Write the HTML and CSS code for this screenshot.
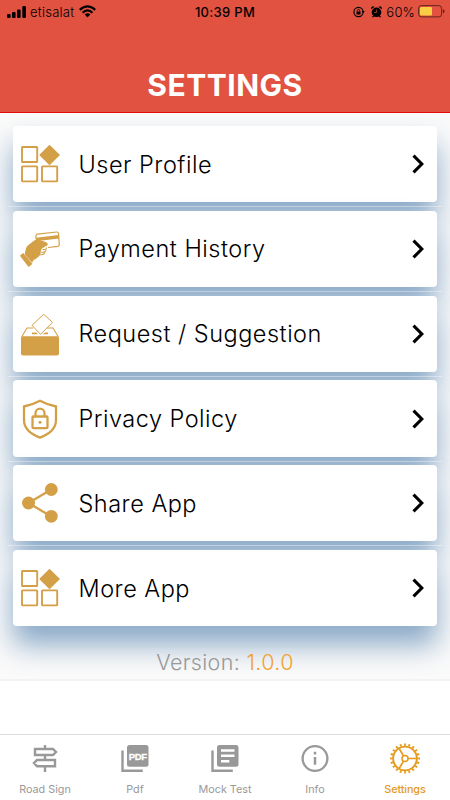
FILE: index.html
```html
<!DOCTYPE html>
<html lang="en">
<head>
<meta charset="utf-8">
<title>Settings</title>
<link rel="stylesheet" href="styles.css">
</head>
<body>
<svg class="defs" width="0" height="0" aria-hidden="true">
  <symbol id="grid" viewBox="0 0 40 40">
    <g fill="none" stroke="currentColor" stroke-width="1.9"><rect x="2" y="3" width="15.2" height="15" rx=".6"/><rect x="2" y="22.4" width="15.2" height="15" rx=".6"/><rect x="22" y="22.4" width="15.2" height="15" rx=".6"/></g>
    <path fill="currentColor" stroke="currentColor" stroke-width="1.5" stroke-linejoin="round" d="M29.5 1.7 39 11 29.5 20.3 20.2 11z"/>
  </symbol>
  <symbol id="chevron" viewBox="0 0 12 20"><path d="M1.5 1.6 9.8 10 1.5 18.4" fill="none" stroke="currentColor" stroke-width="3.1"/></symbol>
</svg>
<div class="phone">
  <header class="header">
    <div class="status">
      <div class="status-left">
        <svg width="20" height="12" viewBox="0 0 20 12"><rect x="0" y="8" width="3.6" height="4" rx="1"/><rect x="5" y="6" width="3.6" height="6" rx="1"/><rect x="10" y="3.4" width="3.6" height="8.6" rx="1"/><rect x="15.3" y="0" width="3.6" height="12" rx="1"/></svg>
        <span class="carrier">etisalat</span>
        <svg width="17" height="13" viewBox="0 0 17 13"><g fill="none" stroke="#000" stroke-width="2.2"><path d="M.8 4.9Q8.500-2 16.200 4.900"/><path d="M3.600 7.700Q8.500 3.200 13.400 7.700"/></g><path d="M5.700 9.500Q8.500 7 11.300 9.500L8.500 12.400z"/></svg>
      </div>
      <span class="time">10:39 PM</span>
      <div class="status-right">
        <svg width="12" height="12" viewBox="0 0 12 12"><circle cx="5.500" cy="6" r="4.600" fill="none" stroke="#000" stroke-width="1.100"/><rect x="3.500" y="5.500" width="4" height="3"/><path d="M4.300 5.500V4.600a1.200 1.200 0 0 1 2.400 0v.9" fill="none" stroke="#000" stroke-width=".8"/><path d="M8.700 5h3l-1.500 2.300z"/></svg>
        <svg class="alarm" width="11" height="12" viewBox="0 0 11 12"><circle cx="5.500" cy="6.300" r="4.800"/><path d="M.3 3.300A2 2 0 0 1 3.400.9zM10.700 3.300A2 2 0 0 0 7.600.9zM2 9.500.9 11.300h1.300l1.200-1zM9 9.500l1.100 1.800H8.800l-1.200-1z"/><path d="M5.600 3.600v2.900H3" fill="none" stroke="#e15241" stroke-width=".7"/></svg>
        <span class="percent">60%</span>
        <svg width="27" height="13" viewBox="0 0 27 13"><rect x=".6" y=".6" width="23" height="11.300" rx="2.800" fill="none" stroke="#000" stroke-opacity=".55"/><rect x="2" y="2" width="12" height="8.500" rx="1.300" fill="#f9ce45"/><path d="M24.900 4.200q1.600.4 1.600 2t-1.600 2z" fill-opacity=".6"/></svg>
      </div>
    </div>
    <h1>SETTINGS</h1>
  </header>
  <main class="content">
    <ul class="list">
      <li class="item"><svg class="icon"><use href="#grid"/></svg><span class="label">User Profile</span><svg class="chev"><use href="#chevron"/></svg></li>
      <li class="item"><svg class="icon" viewBox="0 0 40 40">
        <path fill="none" stroke="currentColor" stroke-width="1.200" d="M16.200 10.500 15.900 7q0-1.600 1.700-1.800L36.800 3q1.500-.1 1.700 1.400l.8 11q.1 1.600-1.400 1.900l-9.900 1.200"/>
        <path fill="currentColor" d="M16 8.800 38.700 6l.3 3.400-23 2.800z"/>
        <path fill="currentColor" d="M4.700 25.400 5.800 20q.5-2.500 2.600-4l5.500-4.300q1.600-1.200 3.600-1l5 1.400q3.600.9 5 2.200.9 1.400-.9 2.400l-4.300 2.600q-1.300 1-1.400 2.800-.1 3.500-2.200 5.500-2 2-5.300 3.700l-1.300 2.400z"/>
        <path fill="currentColor" d="M.3 27.200q-.4-.5.1-1l2.800-2.200 9.200 10.800-3 2.700q-.7.500-1.200 0z"/>
        <path fill="none" stroke="currentColor" stroke-width="1.100" stroke-linecap="round" d="M23 20.500q3.500.5 3.500-1.700M21.500 23.200q4 .4 4.400-1.600M20.500 25.700q3.500.2 4-1.800"/></svg><span class="label">Payment History</span><svg class="chev"><use href="#chevron"/></svg></li>
      <li class="item"><svg class="icon" viewBox="0 0 40 40">
        <rect x="1" y="22.200" width="38" height="19.200" rx="2" fill="currentColor"/>
        <path d="M1.600 23 7 14h6M27 14h6L38.400 23" fill="none" stroke="currentColor" stroke-width="1.100"/>
        <path d="M12 18.400h4.300l1.600 1.800H12zM24.800 18.400H28v1.800h-5z" fill="currentColor"/>
        <path d="m12 11.300 11.700-11 8.800 8L20.500 20.400z" fill="#fff" stroke="currentColor" stroke-width="1"/></svg><span class="label">Request / Suggestion</span><svg class="chev"><use href="#chevron"/></svg></li>
      <li class="item"><svg class="icon" viewBox="0 0 40 40"><g fill="none" stroke="currentColor" stroke-width="2.300"><path d="M20 1.700Q28 6 36 7.500V21q0 11.600-16 17.600Q4 32.600 4 21V7.500Q12 6 20 1.700z"/><rect x="12.500" y="17.500" width="15" height="11.600" rx=".8"/><path d="M15.500 17.500v-3.300a4.500 4.500 0 0 1 9 0v3.300"/></g><circle cx="20" cy="23.300" r="1.500" fill="currentColor"/></svg><span class="label">Privacy Policy</span><svg class="chev"><use href="#chevron"/></svg></li>
      <li class="item"><svg class="icon" viewBox="0 0 40 40"><path d="M31.300 6.500 8.500 20 31.300 33.500" fill="none" stroke="currentColor" stroke-width="2.300"/><g fill="currentColor"><circle cx="31.300" cy="6.500" r="6.400"/><circle cx="8.500" cy="20" r="6.500"/><circle cx="31.300" cy="33.300" r="6.400"/></g></svg><span class="label">Share App</span><svg class="chev"><use href="#chevron"/></svg></li>
      <li class="item"><svg class="icon"><use href="#grid"/></svg><span class="label">More App</span><svg class="chev"><use href="#chevron"/></svg></li>
    </ul>
    <p class="version">Version: <span>1.0.0</span></p>
  </main>
  <nav class="tabs">
    <div class="tab"><svg viewBox="0 0 32 32"><path d="M16 3v3M16 13.500v4M16 24.500v5.500" stroke="currentColor" stroke-width="2.400"/><path d="M6 7h18l3 3-3 3H6zM26 18v6.200H8l-3-3.100 3-3.100z" fill="none" stroke="currentColor" stroke-width="2.400"/></svg><span>Road Sign</span></div>
    <div class="tab"><svg viewBox="0 0 32 32"><path d="M3.500 8.500v20.200h20.300" fill="none" stroke="currentColor" stroke-width="2.400"/><rect x="8" y="3" width="21.500" height="21.800" rx="2.500" fill="currentColor"/><text class="pdf" x="9.700" y="17.500" textLength="18.300" lengthAdjust="spacing">PDF</text></svg><span>Pdf</span></div>
    <div class="tab"><svg viewBox="0 0 32 32"><path d="M3.500 8.500v20.200h20.300" fill="none" stroke="currentColor" stroke-width="2.400"/><rect x="8" y="3" width="21.500" height="21.800" rx="2.500" fill="currentColor"/><path d="M12 8.500h13.500M12 13.800h13.500M12 19.200h8.300" stroke="#fff" stroke-width="2.500"/></svg><span>Mock Test</span></div>
    <div class="tab"><svg viewBox="0 0 32 32"><circle cx="16" cy="16.500" r="12.400" fill="none" stroke="currentColor" stroke-width="2.300"/><path d="M16 9.800v2.700M16 15v7.800" stroke="currentColor" stroke-width="2.500"/></svg><span>Info</span></div>
    <div class="tab active"><svg viewBox="0 0 32 32"><g fill="none" stroke="currentColor"><circle cx="16" cy="16.500" r="11.900" stroke-width="1.900"/><circle cx="16" cy="16.500" r="13.800" stroke-width="2.400" pathLength="80" stroke-dasharray="1.700 2.300" stroke-dashoffset=".85"/><circle cx="16" cy="16.500" r="3" stroke-width="1.500"/><path d="M19 16.500h9M14.500 13.900 10 6.200M14.500 19.100 10 26.800" stroke-width="1.700"/></g></svg><span>Settings</span></div>
  </nav>
</div>
</body>
</html>
```

FILE: styles.css
```css
* { box-sizing: border-box; }
body { margin: 0; font-family: Inter, "Liberation Sans", sans-serif; background: #fff; }
.defs { position: absolute; }
.phone { width: 450px; height: 800px; display: flex; flex-direction: column; overflow: hidden; }
.header { height: 113px; background: #e15241; border-bottom: 1px solid #e30b0b; flex: none; }
.status { display: grid; grid-template-columns: 1fr auto 1fr; align-items: center; height: 23px; padding: 0 5px 0 7px; font-size: 13px; }
.status-left, .status-right { display: flex; align-items: center; }
.status-left { font-weight: 350; }
.status-right { justify-content: flex-end; font-weight: 350; }
.carrier { margin: 0 5px 0 3px; letter-spacing: .25px; }
.time { font-weight: 500; letter-spacing: .3px; margin-left: -2px; }
.alarm { margin: 0 4px 0 6px; }
.percent { margin-right: 3px; letter-spacing: .2px; }
h1 { margin: 42px 0 0; font-size: 30px; line-height: 40px; font-weight: 700; letter-spacing: .5px; text-align: center; color: #fff; }
.content { height: 568px; flex: none; background: #fafafa; border-bottom: 2px solid #f3f3f3; padding: 13px 13px 0; overflow: hidden; }
.list { list-style: none; margin: 0; padding: 0; display: flex; flex-direction: column; gap: 8.500px; }
.item { position: relative; display: flex; align-items: center; height: 76.300px; padding: 0 13px 0 7px; border-radius: 4px; background: #fff; box-shadow: 0 19px 29px 0 #8aa9c7; }
.item:not(:last-child)::after { content: ""; position: absolute; left: -5px; right: -5px; bottom: -5px; height: 1px; background: rgba(255,255,255,.4); }
.icon { width: 40px; height: 40px; color: #d3a047; overflow: visible; }
.label { flex: 1; margin-left: 18.500px; font-size: 23.500px; font-weight: 350; letter-spacing: .5px; color: #000; }
.chev { width: 12px; height: 20px; }
.version { margin: 22px 0 0; position: relative; text-align: center; font-size: 21.500px; line-height: 28px; font-weight: 350; color: #999; letter-spacing: .35px; }
.version span { color: #f3a12d; }
.tabs { margin-top: auto; height: 66px; border-top: 1px solid #dedede; display: grid; grid-template-columns: repeat(5, 1fr); flex: none; }
.tab { display: flex; flex-direction: column; align-items: center; padding-top: 7px; color: #999; font-size: 10.800px; line-height: 14px; gap: 9px; }
.tab svg { width: 32px; height: 32px; overflow: visible; }
.tab.active { color: #e69a1c; }
.tab.active span { font-weight: 500; letter-spacing: -.1px; }
.pdf { font: 700 9.500px "Liberation Sans", sans-serif; fill: #fff; stroke: #fff; stroke-width: .3px; }
```
